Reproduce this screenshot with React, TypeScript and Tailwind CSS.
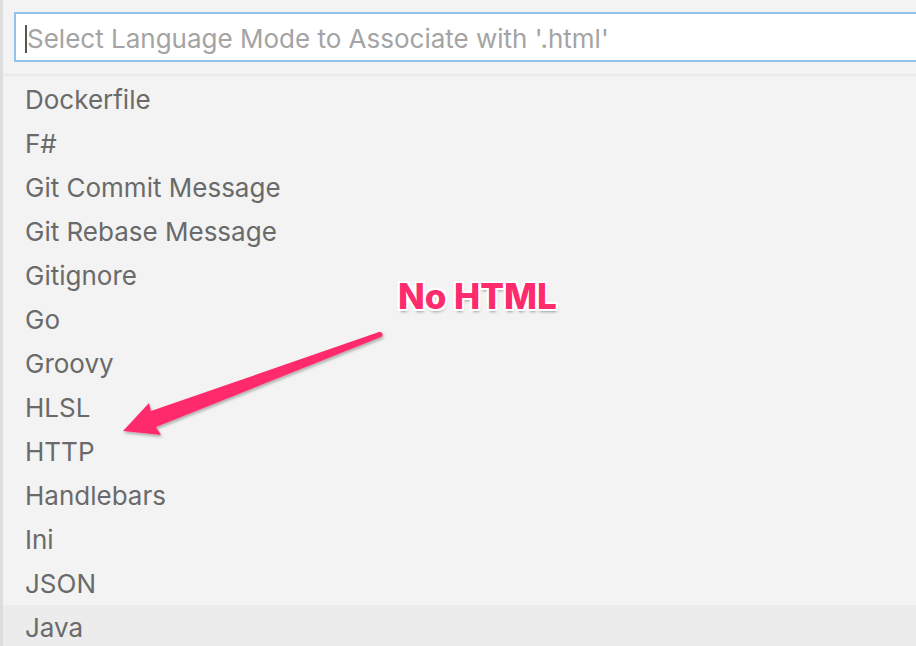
import React from 'react';

const languages = [
  'Dockerfile',
  'F#',
  'Git Commit Message',
  'Git Rebase Message',
  'Gitignore',
  'Go',
  'Groovy',
  'HLSL',
  'HTTP',
  'Handlebars',
  'Ini',
  'JSON',
  'Java',
];

function Arrow() {
  return (
    <svg className="absolute left-0 top-0" width="916" height="646" viewBox="0 0 916 646">
      <defs>
        <filter id="arrowShadow" x="-10%" y="-10%" width="120%" height="130%">
          <feDropShadow dx="1" dy="2" stdDeviation="1.5" floodColor="#000" floodOpacity="0.3" />
        </filter>
      </defs>
      <g filter="url(#arrowShadow)">
        <polygon
          points="376,332 148,411 146,403 120,431 158,435 153,427 378,337"
          fill="#fe2c6c"
          strokeLinejoin="round"
        />
        <circle cx="377" cy="334.5" r="2.5" fill="#fe2c6c" />
      </g>
    </svg>
  );
}

export default function App() {
  return (
    <div
      className="relative h-[646px] w-[916px] overflow-hidden border-l-[3px] border-[#dddddd] bg-[#f3f3f3]"
      style={{ fontFamily: 'Inter, "Liberation Sans", sans-serif' }}
    >
      <div className="absolute left-[-3px] top-[41px] h-[2px] w-[3px] bg-[#9a9a9a]" />

      {/* quick pick input */}
      <div className="pb-[12px] pl-[11px] pt-[12px]">
        <div className="-mr-[6px] flex h-[50px] items-center border-2 border-[#92c3ee] bg-white pl-[9px] pt-[3px]">
          <span className="h-[28px] w-[2px] bg-[#555]" />
          <span className="text-[26px] leading-none text-[#a4a4a4]">
            Select Language Mode to Associate with '.html'
          </span>
        </div>
      </div>
      <div className="h-[3px] bg-gradient-to-b from-[#e6e6e6] to-[#f3f3f3]" />

      {/* list */}
      <div>
        {languages.map((lang) => (
          <div
            key={lang}
            className={`flex h-[44px] items-center pl-[22px] text-[26px] text-[#6a6a6a] ${
              lang === 'Java' ? 'bg-[#ececec]' : ''
            }`}
          >
            {lang}
          </div>
        ))}
      </div>

      <Arrow />

      <div
        className="absolute left-[395px] top-[279px] text-[35px] font-extrabold leading-none text-[#fe2c6c]"
        style={{
          textShadow:
            '2px 0 0 #fff, -2px 0 0 #fff, 0 2px 0 #fff, 0 -2px 0 #fff, 2px 2px 0 #fff, -2px -2px 0 #fff, 2px -2px 0 #fff, -2px 2px 0 #fff, 1px 3px 3px rgba(0,0,0,0.35)',
        }}
      >
        No HTML
      </div>
    </div>
  );
}
